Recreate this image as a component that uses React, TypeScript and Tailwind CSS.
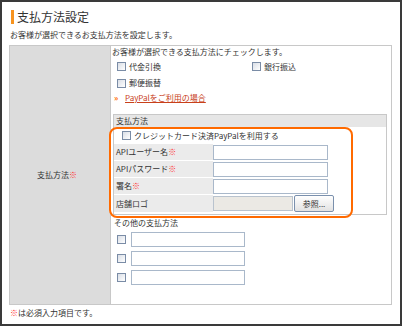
import React from "react";

function Check() {
  return (
    <span className="inline-block w-[9px] h-[9px] shrink-0 border border-[#7a8ca6] bg-linear-to-br from-[#d9dee6] to-white" />
  );
}

function Req() {
  return <span className="text-[#ff2a2a]">※</span>;
}

function Field({ w = 115 }: { w?: number }) {
  return (
    <span
      className="block h-[15px] border border-[#a9b8ca] bg-white"
      style={{ width: w }}
    />
  );
}

export default function App() {
  const rows: { label: string; req: boolean }[] = [
    { label: "APIユーザー名", req: true },
    { label: "APIパスワード", req: true },
    { label: "署名", req: true },
  ];
  return (
    <div className="w-[402px] h-[326px] border-2 border-[#3a3a3a] bg-white overflow-hidden text-[#333] font-['Noto_Sans_CJK_JP','Noto_Sans',sans-serif] text-[8px] leading-[10px]">
      {/* Title */}
      <div className="flex items-center mt-[8px] ml-[9px] h-[14px]">
        <span className="w-[3px] h-[14px] bg-[#f7931e]" />
        <span className="ml-[3px] text-[12px] leading-[14px] text-[#333]">支払方法設定</span>
      </div>
      <div className="ml-[8px] mt-[6px] h-[10px]">お客様が選択できるお支払方法を設定します。</div>

      {/* Table */}
      <div className="ml-[7px] mt-[5px] w-[383px] h-[260px] border border-[#c8c8c8] grid grid-cols-[101px_1fr]">
        <div className="bg-[#dcdcdc] border-r border-[#c8c8c8] flex items-center justify-center pr-[6px]">
          <span>
            支払方法<Req />
          </span>
        </div>
        <div className="flex flex-col">
          <div className="h-[12px] pl-[1px] flex items-center">お客様が選択できる支払方法にチェックします。</div>
          <div className="h-[17px] pl-[6px] flex items-center">
            <div className="w-[135px] flex items-center gap-[3px]">
              <Check />
              <span>代金引換</span>
            </div>
            <div className="flex items-center gap-[3px]">
              <Check />
              <span>銀行振込</span>
            </div>
          </div>
          <div className="h-[16px] pl-[6px] flex items-center gap-[3px]">
            <Check />
            <span>郵便振替</span>
          </div>
          <div className="h-[14px] pl-[3px] flex items-center">
            <span className="text-[#ff6a00] font-bold w-[11px]">»</span>
            <span className="text-[#c8401a] underline">PayPalをご利用の場合</span>
          </div>

          {/* Inner box */}
          <div className="relative ml-[2px] mt-[9px] w-[274px] border border-[#c8c8c8] pb-[2px]">
            <div className="h-[12px] bg-[#e6e6e6] pl-[2px] flex items-center">支払方法</div>
            <div className="h-[17px] pl-[8px] flex items-center gap-[3px]">
              <Check />
              <span>クレジットカード決済PayPalを利用する</span>
            </div>
            {rows.map((r) => (
              <div key={r.label} className="h-[17px] grid grid-cols-[99px_1fr]">
                <div className="bg-[#ebebeb] border-b border-white pl-[2px] flex items-center">
                  <span>
                    {r.label}
                    {r.req && <Req />}
                  </span>
                </div>
                <div className="flex items-center">
                  <Field />
                </div>
              </div>
            ))}
            <div className="h-[17px] grid grid-cols-[99px_1fr]">
              <div className="bg-[#ebebeb] pl-[2px] flex items-center">店舗ロゴ</div>
              <div className="flex items-center gap-[1px]">
                <span className="block w-[80px] h-[15px] border border-[#b9c3ce] bg-[#ebe9e4]" />
                <span className="w-[40px] h-[17px] border border-[#7a90ad] rounded-[2px] bg-linear-to-b from-white to-[#e2e2e2] flex items-center justify-center">
                  参照...
                </span>
              </div>
            </div>
            <div className="absolute left-[-5px] top-[12px] w-[244px] h-[91px] border-2 border-[#ff6a00] rounded-[8px] pointer-events-none" />
          </div>

          <div className="h-[16px] pl-[3px] flex items-center">その他の支払方法</div>
          <div className="mt-[1px] pl-[6px] flex flex-col gap-[4px]">
            {[0, 1, 2].map((i) => (
              <div key={i} className="h-[15px] flex items-center gap-[5px]">
                <Check />
                <Field w={114} />
              </div>
            ))}
          </div>
        </div>
      </div>

      <div className="ml-[8px] mt-[1px] h-[14px] flex items-center">
        <span>
          <Req />
          は必須入力項目です。
        </span>
      </div>
    </div>
  );
}
